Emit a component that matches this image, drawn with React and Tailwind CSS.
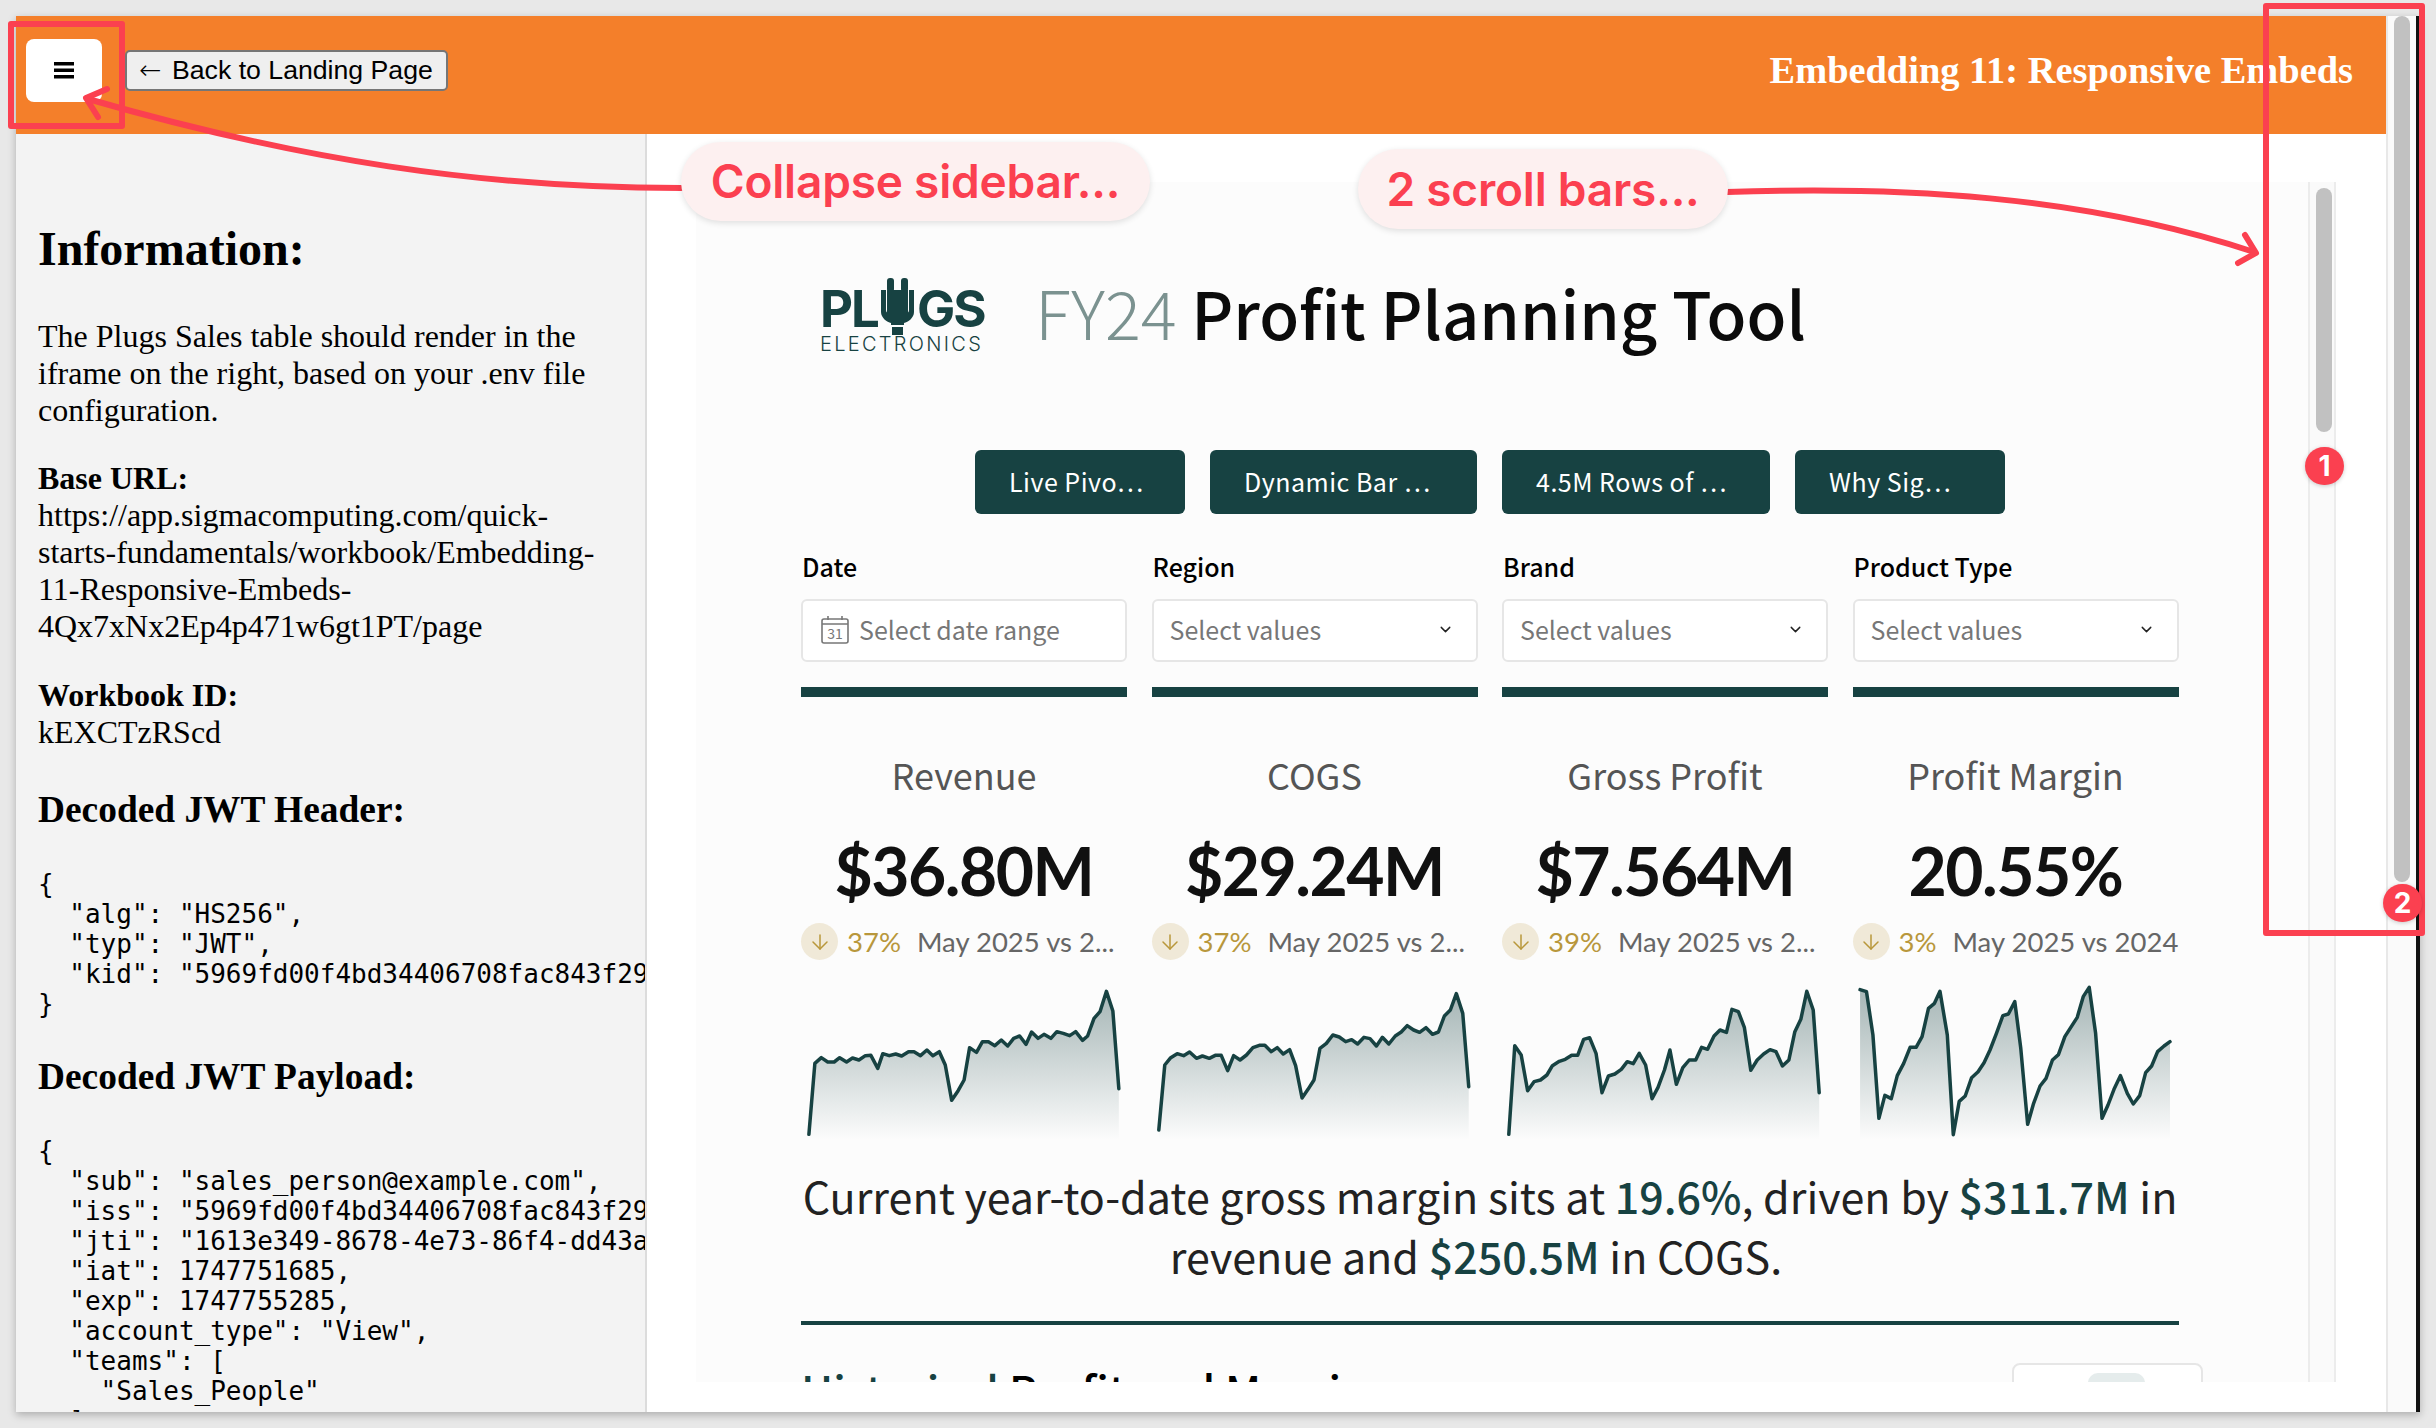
import React from "react";
import { ChevronDown, ArrowDown } from "lucide-react";

const TEAL = "#174242";

// traced in zoomed pixels: x is 2.178 per px, y is 3 per px
const sparks = [
  { x0: 45.8, pts: [[63,703],[76,490],[90,473],[104,486],[118,486],[130,473],[145,486],[158,474],[172,480],[186,467],[198,466],[213,505],[224,461],[238,467],[252,462],[265,468],[280,455],[292,455],[306,467],[320,450],[333,467],[347,455],[360,495],[374,601],[388,572],[401,540],[413,443],[428,457],[441,425],[454,425],[468,437],[482,420],[496,438],[509,415],[522,408],[536,433],[548,396],[562,415],[575,403],[590,415],[603,395],[617,400],[631,407],[644,395],[659,421],[670,408],[684,355],[697,335],[711,274],[725,333],[738,566]] },
  { x0: 810.2, pts: [[825,690],[838,495],[851,473],[865,461],[879,467],[892,456],[907,475],[920,468],[935,475],[948,466],[961,466],[975,512],[988,467],[1002,480],[1016,465],[1030,443],[1044,436],[1056,436],[1070,455],[1083,443],[1096,462],[1110,449],[1123,497],[1137,594],[1150,568],[1163,540],[1176,445],[1190,430],[1204,405],[1218,411],[1232,425],[1245,419],[1258,432],[1272,412],[1285,416],[1299,438],[1312,412],[1326,432],[1340,408],[1353,396],[1366,377],[1380,390],[1393,397],[1407,383],[1421,403],[1434,396],[1447,348],[1460,330],[1473,281],[1487,340],[1500,560]] },
  { x0: 50.2, pts: [[65,703],[78,437],[92,465],[106,572],[120,545],[134,540],[148,525],[160,497],[175,484],[188,478],[202,466],[215,466],[228,418],[241,413],[255,460],[268,578],[282,528],[296,522],[310,508],[323,485],[336,491],[349,460],[363,495],[377,596],[390,562],[404,510],[416,450],[430,553],[444,503],[458,480],[472,480],[485,442],[498,448],[512,408],[525,390],[539,397],[551,328],[565,335],[578,382],[592,511],[606,480],[620,462],[634,449],[647,455],[661,498],[675,480],[688,395],[701,358],[714,274],[728,330],[741,578]] },
  { x0: 814.6, pts: [[830,269],[844,275],[858,405],[871,655],[884,586],[898,596],[911,527],[925,490],[939,442],[952,442],[965,410],[979,325],[992,310],[1004,274],[1020,405],[1033,704],[1046,604],[1059,588],[1073,533],[1087,515],[1100,488],[1113,450],[1127,400],[1141,347],[1153,342],[1167,305],[1180,445],[1195,673],[1208,610],[1222,558],[1235,535],[1249,480],[1262,464],[1276,410],[1290,380],[1303,352],[1316,290],[1329,262],[1343,400],[1357,655],[1370,615],[1383,568],[1397,527],[1412,580],[1425,612],[1439,587],[1452,518],[1465,498],[1478,455],[1492,438],[1505,425]] },
];

const kpis = [
  { title: "Revenue", value: "$36.80M", pct: "37%", note: "May 2025 vs 2..." },
  { title: "COGS", value: "$29.24M", pct: "37%", note: "May 2025 vs 2..." },
  { title: "Gross Profit", value: "$7.564M", pct: "39%", note: "May 2025 vs 2..." },
  { title: "Profit Margin", value: "20.55%", pct: "3%", note: "May 2025 vs 2024" },
];

const buttons = [
  { label: "Live Pivo…", width: "w-[210px]" },
  { label: "Dynamic Bar …", width: "w-[267px]" },
  { label: "4.5M Rows of …", width: "w-[268px]" },
  { label: "Why Sig…", width: "w-[210px]" },
];

const Spark = ({ x0, pts, id }) => {
  const line = pts.map((p) => p.join(",")).join(" ");
  const first = pts[0];
  const last = pts[pts.length - 1];
  const area = `${first[0]},720 ${line} ${last[0]},720`;
  return (
    <svg width="326" height="170" viewBox={`${x0} 240 710 510`} preserveAspectRatio="none" className="block">
      <defs>
        <linearGradient id={id} x1="0" y1="0" x2="0" y2="1">
          <stop offset="0" stopColor={TEAL} stopOpacity="0.38" />
          <stop offset="1" stopColor={TEAL} stopOpacity="0" />
        </linearGradient>
      </defs>
      <polygon points={area} fill={`url(#${id})`} />
      <polyline points={line} fill="none" stroke={TEAL} strokeWidth="3.5" strokeLinejoin="round" strokeLinecap="round" vectorEffect="non-scaling-stroke" />
    </svg>
  );
};

const Logo = () => (
  <div className="w-[165px] h-[75px] flex flex-col shrink-0" style={{ color: TEAL }}>
    <div className="flex items-start h-[60px]">
      <span className="[font-family:Inter,sans-serif] font-bold text-[51px] leading-[37px] mt-[12px] tracking-[-2px]">PL</span>
      <svg width="33" height="58" viewBox="0 0 33 58" className="ml-[3px] shrink-0" fill={TEAL}>
        <rect x="6" y="0" width="7" height="14" rx="3" />
        <rect x="20" y="0" width="7" height="14" rx="3" />
        <path d="M0 12h5v20a3 3 0 0 0 3 3h17a3 3 0 0 0 3-3V12h5v22c0 6-6 10-10 11v2H10v-2C6 44 0 40 0 34z" />
        <rect x="6" y="12" width="21" height="24" />
        <rect x="11" y="49" width="11" height="8" />
      </svg>
      <span className="[font-family:Inter,sans-serif] font-bold text-[51px] leading-[37px] mt-[12px] ml-[3px] tracking-[-2px]">GS</span>
    </div>
    <span className="[font-family:Inter,sans-serif] font-light text-[20px] leading-[17px] tracking-[2.3px] whitespace-nowrap">ELECTRONICS</span>
  </div>
);

const Filter = ({ label, placeholder, date }) => (
  <div>
    <div className="-mt-[1px] text-[25px] leading-[32px] font-medium text-black ml-[1px]">{label}</div>
    <div className={`mt-[17px] h-[63px] border-2 border-[#e6e6e6] rounded-[6px] bg-white flex items-center justify-between ${date ? "pl-[18px]" : "pl-[16px]"} pr-[22px] pb-[2px] text-[#777] text-[25px]`}>
      {date ? (
        <div className="flex items-center gap-[10px]">
          <svg width="28" height="28" viewBox="0 0 28 28" fill="none" stroke="#777" strokeWidth="1.6">
            <rect x="1" y="3" width="26" height="24" rx="2" />
            <path d="M1 8h26M7 0v4M21 0v4" />
            <text x="14" y="23" textAnchor="middle" fontSize="14" fill="#777" stroke="none">31</text>
          </svg>
          <span>{placeholder}</span>
        </div>
      ) : (
        <>
          <span>{placeholder}</span>
          <ChevronDown size={17} color="#222" strokeWidth={2} />
        </>
      )}
    </div>
    <div className="mt-[25px] h-[10px] bg-[#174242]" />
  </div>
);

const Kpi = ({ kpi, i }) => (
  <div className="w-[326px]">
    <div className="mt-[53px] h-[48px] leading-[48px] text-center text-[36px] text-[#555]">{kpi.title}</div>
    <div className="mt-[33px] h-[80px] leading-[80px] text-center text-[66px] font-bold text-[#111] tracking-[-1.5px] [font-family:Lato,sans-serif]">{kpi.value}</div>
    <div className="mt-[12px] h-[37px] flex items-center [font-family:Lato,sans-serif] text-[27.5px] whitespace-nowrap">
      <div className="w-[37px] h-[37px] rounded-full bg-[#f0e9d8] flex items-center justify-center shrink-0">
        <ArrowDown size={24} color="#b8973b" strokeWidth={1.5} />
      </div>
      <span className="ml-[9px] text-[#b8973b]">{kpi.pct}</span>
      <span className="ml-[16px] text-[#666]">{kpi.note}</span>
    </div>
    <div className="mt-[20px]">
      <Spark x0={sparks[i].x0} pts={sparks[i].pts} id={`spark-${i}`} />
    </div>
  </div>
);

const Sidebar = () => (
  <aside className="w-[631px] shrink-0 h-full overflow-hidden bg-[#f3f3f3] border-r-2 border-[#dcdcdc] pl-[22px] text-black text-[32px] leading-[37px] [font-family:'Liberation_Serif',serif]">
    <h2 className="mt-[87px] text-[48px] leading-[55px] font-bold">Information:</h2>
    <p className="mt-[42px] w-[590px]">The Plugs Sales table should render in the iframe on the right, based on your .env file configuration.</p>
    <p className="mt-[31px] w-[600px]">
      <strong>Base URL:</strong>
      <br />
      https://app.sigmacomputing.com/quick-
      <br />
      starts-fundamentals/workbook/Embedding-
      <br />
      11-Responsive-Embeds-
      <br />
      4Qx7xNx2Ep4p471w6gt1PT/page
    </p>
    <p className="mt-[32px]">
      <strong>Workbook ID:</strong>
      <br />
      kEXCTzRScd
    </p>
    <h3 className="mt-[37px] text-[37.4px] leading-[43px] font-bold">Decoded JWT Header:</h3>
    <pre className="mt-[38px] text-[26px] leading-[30px] [font-family:'DejaVu_Sans_Mono',monospace] overflow-hidden">{`{
  "alg": "HS256",
  "typ": "JWT",
  "kid": "5969fd00f4bd34406708fac843f29a1c"
}`}</pre>
    <h3 className="mt-[36px] text-[37.4px] leading-[43px] font-bold">Decoded JWT Payload:</h3>
    <pre className="mt-[38px] text-[26px] leading-[30px] [font-family:'DejaVu_Sans_Mono',monospace] overflow-hidden">{`{
  "sub": "sales_person@example.com",
  "iss": "5969fd00f4bd34406708fac843f29a1c",
  "jti": "1613e349-8678-4e73-86f4-dd43a17b",
  "iat": 1747751685,
  "exp": 1747755285,
  "account_type": "View",
  "teams": [
    "Sales_People"
  ]
}`}</pre>
  </aside>
);

const Embed = () => (
  <div className="flex-1 min-w-0 flex pl-[49px] pt-[48px] pb-[30px] pr-[50px] h-full bg-white">
    <div className="w-[1612px] h-full overflow-hidden bg-[#fcfcfc] pl-[105px] pt-[96px] [font-family:'Noto_Sans_CJK_SC',sans-serif]">
      <div className="w-[1378px]">
        <div className="flex items-center h-[75px] ml-[19px]">
          <Logo />
          <h1 className="ml-[50px] pb-[9px] text-[65px] leading-[75px] font-medium text-[#0b0b0b] whitespace-nowrap">
            <span className="font-light text-[67px] text-[#7b9290]">FY24</span> Profit Planning Tool
          </h1>
        </div>

        <div className="mt-[97px] flex justify-center gap-[25px] text-[25px] text-white">
          {buttons.map((b) => (
            <div key={b.label} className={`${b.width} h-[64px] pl-[34px] flex items-center rounded-[6px] bg-[#174242] tracking-[0.5px] whitespace-nowrap`}>{b.label}</div>
          ))}
        </div>

        <div className="mt-[37px] grid grid-cols-[326px_326px_326px_326px] gap-x-[24.5px]">
          <Filter label="Date" placeholder="Select date range" date />
          <Filter label="Region" placeholder="Select values" />
          <Filter label="Brand" placeholder="Select values" />
          <Filter label="Product Type" placeholder="Select values" />
        </div>

        <div className="grid grid-cols-[326px_326px_326px_326px] gap-x-[24.5px]">
          {kpis.map((k, i) => (
            <Kpi key={k.title} kpi={k} i={i} />
          ))}
        </div>

        <div className="mt-[15px] text-center text-[43px] leading-[60px] text-[#222] whitespace-nowrap">
          <p>
            Current year-to-date gross margin sits at <b className="font-medium text-[#174242]">19.6%</b>, driven by <b className="font-medium text-[#174242]">$311.7M</b> in
          </p>
          <p className="pr-[28px]">
            revenue and <b className="font-medium text-[#174242]">$250.5M</b> in COGS.
          </p>
        </div>

        <div className="mt-[36px] h-[4px] bg-[#174242]" />

        <div className="mt-[38px] flex justify-between -mr-[24px]">
          <div className="text-[43.5px] leading-[54px] font-medium text-black whitespace-nowrap">
            <span className="text-[#174242]">Historical</span> Profit and Margin
          </div>
          <div className="w-[191px] h-[80px] border-2 border-[#e6e6e6] rounded-[8px] flex justify-center pt-[8px] pl-[18px] bg-white">
            <div className="w-[57px] h-[40px] bg-[#e5ecec] rounded-t-[10px]" />
          </div>
        </div>
      </div>
    </div>
    <div className="w-[28px] shrink-0 h-full bg-[#fafafa] border-x-2 border-[#ececec] pl-[6px] pt-[6px]">
      <div className="w-[16px] h-[244px] rounded-full bg-[#c1c1c1]" />
    </div>
  </div>
);

const Annotations = () => (
  <>
    <svg className="absolute left-0 top-0 pointer-events-none" width="2436" height="1428" fill="none" stroke="#fb4050" strokeWidth="6" strokeLinecap="round" strokeLinejoin="round">
      <path d="M681 188 C 480 188, 300 160, 88 99" />
      <path d="M107 89 L86 98 L98 117" />
      <path d="M1727 192 C 1900 186, 2080 195, 2254 252" />
      <path d="M2245 235 L2256 253 L2238 263" />
    </svg>
    <div className="absolute left-[8px] top-[21px] w-[117px] h-[108px] border-[6px] border-[#fb4050] rounded-[3px]" />
    <div className="absolute left-[2263px] top-[3px] w-[162px] h-[933px] border-[6px] border-[#fb4050] rounded-[3px]" />
    <div className="absolute left-[681px] top-[142px] w-[469px] h-[79px] rounded-[40px] bg-[#fdf0f0] shadow-[0_2px_6px_rgba(0,0,0,0.12)] flex items-center justify-center text-[#fb4050] font-semibold text-[46px] tracking-[-0.2px] [font-family:Inter,sans-serif] whitespace-nowrap">Collapse sidebar...</div>
    <div className="absolute left-[1358px] top-[149px] w-[370px] h-[80px] rounded-[40px] bg-[#fdf0f0] shadow-[0_2px_6px_rgba(0,0,0,0.12)] flex items-center justify-center text-[#fb4050] font-semibold text-[46px] tracking-[-0.2px] [font-family:Inter,sans-serif] whitespace-nowrap">2 scroll bars...</div>
    <div className="absolute left-[2305px] top-[447px] w-[39px] h-[38px] rounded-full bg-[#fb4050] text-white font-bold text-[28px] flex items-center justify-center [font-family:Inter,sans-serif] shadow-[0_1px_4px_rgba(0,0,0,0.2)]">1</div>
    <div className="absolute left-[2383px] top-[884px] w-[39px] h-[38px] rounded-full bg-[#fb4050] text-white font-bold text-[28px] flex items-center justify-center [font-family:Inter,sans-serif] shadow-[0_1px_4px_rgba(0,0,0,0.2)]">2</div>
  </>
);

export default function App() {
  return (
    <div className="relative w-[2436px] h-[1428px] overflow-hidden bg-[#e8e8e8] pt-[16px] pl-[16px]">
      <div className="w-[2404px] h-[1396px] flex bg-white shadow-[0_3px_8px_rgba(0,0,0,0.25)] border-r-4 border-[#111]">
        <div className="w-[2370px] shrink-0 h-full flex flex-col">
          <header className="h-[118px] shrink-0 bg-[#f47f2a] flex items-center pl-[10px] pr-[33px] pb-[9px]">
            <button className="w-[76px] h-[63px] rounded-[8px] bg-white flex items-center justify-center">
              <svg width="20" height="17" viewBox="0 0 20 17" fill="#000">
                <rect y="0" width="20" height="3.5" />
                <rect y="6.5" width="20" height="3.5" />
                <rect y="13" width="20" height="3.5" />
              </svg>
            </button>
            <button className="ml-[23px] w-[323px] h-[41px] pl-[12px] rounded-[5px] bg-[#efefef] border-2 border-[#767676] flex items-center text-[26.67px] leading-none text-black [font-family:'Liberation_Sans',sans-serif] whitespace-nowrap">
              <span className="w-[33px] text-left [font-family:'DejaVu_Sans',sans-serif] font-extralight">←</span>
              Back to Landing Page
            </button>
            <div className="ml-auto text-white font-bold text-[38.4px] [font-family:'Liberation_Serif',serif] whitespace-nowrap">Embedding 11: Responsive Embeds</div>
          </header>
          <div className="flex-1 min-h-0 flex">
            <Sidebar />
            <Embed />
          </div>
        </div>
        <div className="flex-1 h-full bg-[#fafafa] border-l-2 border-[#e8e8e8] pl-[6px]">
          <div className="w-[16px] h-[866px] rounded-full bg-[#c1c1c1]" />
        </div>
      </div>
      <Annotations />
    </div>
  );
}
